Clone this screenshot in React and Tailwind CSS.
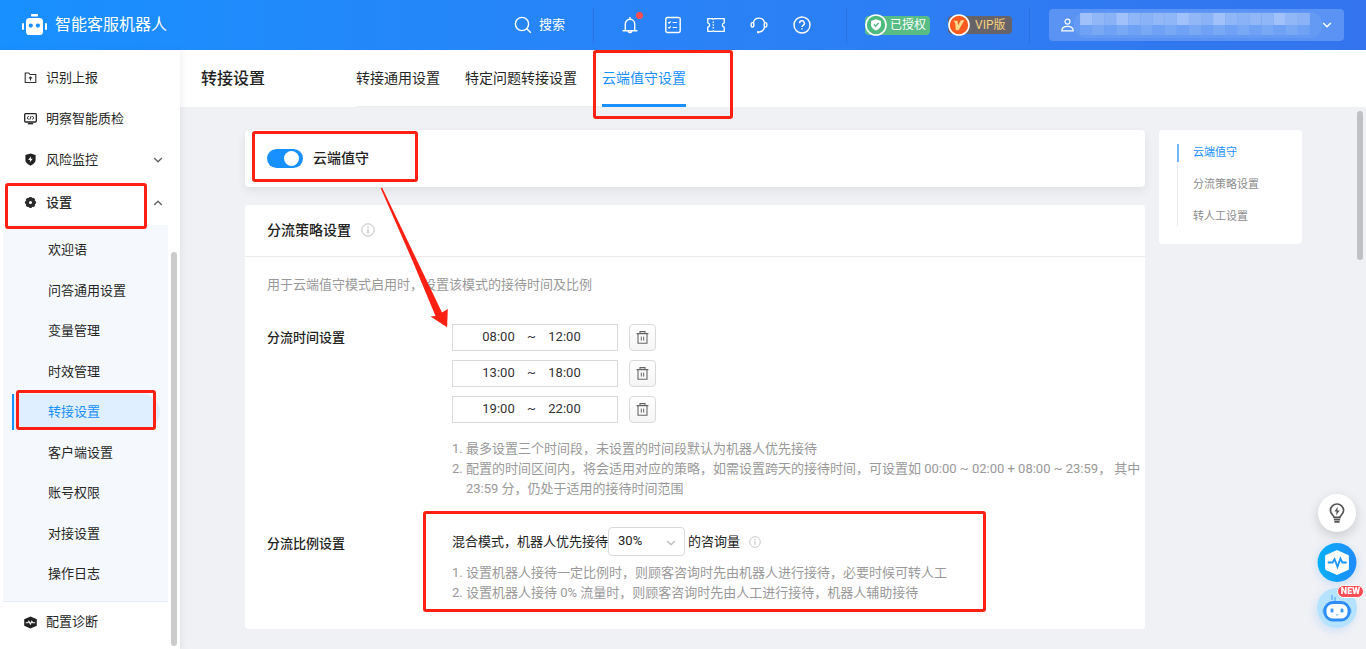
import React from "react";

const SUB_ITEMS = ["欢迎语", "问答通用设置", "变量管理", "时效管理", "转接设置", "客户端设置", "账号权限", "对接设置", "操作日志"];
const TIMES = [["08:00", "12:00"], ["13:00", "18:00"], ["19:00", "22:00"]];

function Line({ size = 18, sw = 1.4, className = "", children }) {
  return (
    <svg width={size} height={size} viewBox="0 0 18 18" fill="none" stroke="currentColor" strokeWidth={sw} className={"shrink-0 " + className} aria-hidden="true">
      {children}
    </svg>
  );
}

function Chevron({ up, size = 10, className = "" }) {
  return (
    <svg width={size} height={size} viewBox="0 0 10 10" fill="none" stroke="currentColor" strokeWidth="1.4" className={className} aria-hidden="true">
      <path d={up ? "M1.2 7 5 3.2 8.8 7" : "M1.2 3 5 6.8 8.8 3"} />
    </svg>
  );
}

function Info({ size }) {
  return (
    <svg width={size} height={size} viewBox="0 0 14 14" fill="none" stroke="#bfbfbf" className="shrink-0" aria-hidden="true">
      <circle cx="7" cy="7" r="6.2" />
      <path d="M7 6v4.2M7 3.6v1.3" strokeWidth="1.3" />
    </svg>
  );
}

function Divider() {
  return <span className="h-9 w-px bg-[#2a72e0]" />;
}

function Header() {
  return (
    <header className="flex h-[50px] shrink-0 items-center bg-linear-to-r from-[#1890ff] to-[#3374ee] px-[22px] text-white">
      <svg width="25" height="22" viewBox="0 0 25 22" fill="#fff" aria-hidden="true">
        <rect x="9" y="0" width="7" height="2.4" rx="0.6" />
        <rect x="4" y="4" width="17" height="17" rx="3.6" />
        <rect x="0" y="9" width="2" height="7" rx="1" />
        <rect x="23" y="9" width="2" height="7" rx="1" />
        <circle cx="8.8" cy="11.6" r="2.1" fill="#1890ff" />
        <circle cx="15.9" cy="11.6" r="2.1" fill="#1890ff" />
      </svg>
      <span className="ml-2 text-base">智能客服机器人</span>

      <div className="ml-auto flex items-center">
        <button className="flex items-center gap-[7px] text-[13px]">
          <Line>
            <circle cx="8" cy="8" r="6.6" />
            <path d="m12.8 12.8 4 4" />
          </Line>
          搜索
        </button>
        <div className="ml-7 flex items-center"><Divider /></div>
        <div className="ml-[27px] flex items-center gap-[25px]">
          <button className="relative" aria-label="通知">
            <Line>
              <path d="M4.3 14.6V8a4.7 4.7 0 0 1 9.4 0v6.6M1.6 14.8h14.8M9 1v2.2M7.3 15.4a1.8 1.8 0 0 0 3.4 0" />
            </Line>
            <span className="absolute -top-1 -right-1 size-[7px] rounded-full bg-[#ff4d4f]" />
          </button>
          <button aria-label="任务">
            <Line>
              <rect x="1.8" y="1.5" width="14.4" height="15" rx="1.4" />
              <path d="m4.2 6.3.9.9 1.7-1.8M8.6 6.5H13M4.2 11.3l.9.9 1.7-1.8M8.6 11.5H13" strokeWidth="1.2" />
            </Line>
          </button>
          <button aria-label="卡券">
            <Line sw={1.3}>
              <path d="M.8 2.6h4.6q.9 1.2 1.8 0h10v4.2q-1.8.3-1.8 2.200t1.8 2.200v4.200h-10q-.9-1.200-1.8 0H.8v-4.200q1.800-.3 1.800-2.200T.8 6.800z" />
              <path d="M6.300 5.400v1.600M6.300 8.200v1.600M6.300 11v1.600" />
            </Line>
          </button>
          <button aria-label="客服">
            <Line>
              <path d="M3.400 6.800a5.700 5.700 0 0 1 11.200 0M14.600 10.800c-.5 3-2.400 4.700-5.200 5.200" />
              <rect x="1.2" y="6.6" width="2.6" height="4.4" rx="1.2" />
              <rect x="14.2" y="6.6" width="2.6" height="4.4" rx="1.2" />
              <path d="M7 16.200h2.600" strokeWidth="2" />
            </Line>
          </button>
          <button aria-label="帮助">
            <Line>
              <circle cx="9" cy="9" r="8" />
              <path d="M6.600 7.200a2.400 2.400 0 1 1 3.500 2.100c-.8.4-1.100.8-1.100 1.600M9 12.200v1.400" />
            </Line>
          </button>
        </div>
        <div className="ml-[35px] flex"><Divider /></div>
        <div className="ml-[18px] flex items-center gap-[18px]">
          <span className="flex h-[19px] w-[65px] items-center rounded bg-[#57bd84] text-xs">
            <svg width="22" height="22" viewBox="0 0 22 22" className="shrink-0" aria-hidden="true">
              <circle cx="11" cy="11" r="10" fill="#4dbb7d" stroke="#fff" strokeWidth="1.6" />
              <path d="M11 5.200 16 7v3.800c0 2.600-2 4.400-5 5.800-3-1.400-5-3.200-5-5.800V7z" fill="#fff" />
              <path d="m8.800 10.400 1.800 1.800 3-3.200" fill="none" stroke="#4dbb7d" strokeWidth="1.3" />
            </svg>
            <span className="ml-[3px] whitespace-nowrap">已授权</span>
          </span>
          <span className="flex h-[18px] w-16 items-center rounded bg-[#666468] text-xs text-[#f8d27c]">
            <svg width="22" height="22" viewBox="0 0 22 22" className="shrink-0" aria-hidden="true">
              <circle cx="11" cy="11" r="10" fill="#fc5a1f" stroke="#fff" strokeWidth="1.6" />
              <path d="M5.600 6.800h4l.4 4.400 3-5h3.400L10.600 16.200H7.800L7.200 9.200z" fill="#ffd98a" />
            </svg>
            <span className="ml-[5px] whitespace-nowrap">VIP版</span>
          </span>
        </div>
        <div className="ml-[17px] flex"><Divider /></div>
        <button className="ml-[19px] flex h-8 w-[295px] items-center rounded-sm bg-[#5a93f3] px-3" aria-label="账号">
          <svg width="13" height="14" viewBox="0 0 13 14" fill="none" stroke="#fff" strokeWidth="1.2" className="shrink-0" aria-hidden="true">
            <circle cx="6.5" cy="3.6" r="2.5" />
            <path d="M.8 12.800c0-3 2.400-4.400 5.700-4.400s5.700 1.400 5.700 4.400z" />
          </svg>
          <svg viewBox="0 0 246 26" preserveAspectRatio="none" className="h-[26px] min-w-0 flex-1" aria-hidden="true">
            <rect width="246" height="26" rx="12" fill="#659af4" />
            {[6, 18, 30, 42, 54, 66, 78, 90, 102, 114, 126, 138, 150, 162, 174, 186, 198, 210, 222].map((x, i) => (
              <g key={x}>
                <rect x={x} y="1" width="12" height="12" fill={["#a0c1f9", "#91b7f7", "#8fb6f7", "#8ab2f6"][(i + (i >> 1)) % 4]} />
                <rect x={x} y="13" width="12" height="10" fill={["#6fa1f4", "#79a8f5", "#6a9df3"][(i + (i >> 1)) % 3]} />
              </g>
            ))}
          </svg>
          <Chevron className="shrink-0" />
        </button>
      </div>
    </header>
  );
}

function NavItem({ icon, label, height = "h-[41px]", arrow, bold }) {
  return (
    <a href="#" className={`flex items-center pr-[5px] pl-6 text-[13px] text-[#262626] ${height}`}>
      {icon}
      <span className={bold ? "ml-[9px] font-medium" : "ml-[9px]"}>{label}</span>
      {arrow && <Chevron up={arrow === "up"} className="ml-auto text-[#666]" />}
    </a>
  );
}

function Sidebar() {
  return (
    <aside className="relative z-10 w-[180px] shrink-0 bg-white shadow-[2px_0_6px_rgba(0,0,0,0.06)]">
      <nav className="pt-[7px] pr-3">
        <NavItem
          label="识别上报"
          icon={
            <svg width="13" height="13" viewBox="0 0 13 13" fill="none" stroke="#333" strokeWidth="1.1" aria-hidden="true">
              <path d="M1.200 11.500V2h3.600l1.200 1.500h5.800v8zM6.500 9.400V6.200M4.900 7.400l1.600-1.500 1.600 1.500" />
            </svg>
          }
        />
        <NavItem
          label="明察智能质检"
          icon={
            <svg width="13" height="13" viewBox="0 0 13 13" fill="none" stroke="#222" strokeWidth="1.3" aria-hidden="true">
              <rect x="0.7" y="1.6" width="11.6" height="8.4" rx="1" />
              <path d="M3.800 11.700h5.400" />
              <path d="M4.800 4.200 3 5.800l1.800 1.600M8.200 4.200 10 5.800 8.200 7.400M7.200 4 5.800 7.600" strokeWidth="1" />
            </svg>
          }
        />
        <NavItem
          label="风险监控"
          arrow="down"
          icon={
            <svg width="13" height="13" viewBox="0 0 13 13" aria-hidden="true">
              <path d="M6.500.4 11.600 2v5c0 2.600-2.200 4.200-5.100 5.700C3.600 11.200 1.400 9.600 1.400 7V2z" fill="#222" />
              <path d="M7 3.200 4.200 6.900h1.900l-.4 2.700 3-3.800H6.800z" fill="#fff" />
            </svg>
          }
        />
        <NavItem
          label="设置"
          arrow="up"
          bold
          height="h-[45px]"
          icon={
            <svg width="13" height="13" viewBox="0 0 13 13" aria-hidden="true">
              <circle cx="6.5" cy="6.5" r="3.2" fill="none" stroke="#2b2b2b" strokeWidth="3.4" />
              <path d="M6.500 1v2M6.500 10v2M1 6.500h2M10 6.500h2M2.600 2.600 4 4M9 9l1.400 1.400M10.400 2.600 9 4M4 9l-1.400 1.400" stroke="#2b2b2b" strokeWidth="2.4" />
            </svg>
          }
        />
        <ul className="ml-[3px] flex h-[377px] flex-col justify-between border-b border-[#e6ecf2] bg-[#f5f9fd] pt-[7px] pb-[9px] text-[13px] text-[#262626]">
          {SUB_ITEMS.map((t) => {
            const active = t === "转接设置";
            return (
              <li key={t}>
                <a
                  href="#"
                  aria-current={active ? "page" : undefined}
                  className={
                    active
                      ? "mr-2 ml-[9px] flex h-9 items-center rounded-r-full border-l-2 border-[#1890ff] bg-[#e0efff] pl-[34px] text-[#1890ff]"
                      : "flex h-9 items-center pl-[45px]"
                  }
                >
                  {t}
                </a>
              </li>
            );
          })}
        </ul>
        <NavItem
          label="配置诊断"
          height="h-10"
          icon={
            <svg width="13" height="13" viewBox="0 0 13 13" aria-hidden="true">
              <path d="M6.500.4 12.800 3.200v6.600L6.500 12.600.2 9.800V3.200z" fill="#222" />
              <path d="M1.800 6.800h2l1.100-1.600 1.500 2.800 1.400-2.600 1 1.400h2.400" fill="none" stroke="#fff" strokeWidth="1.1" />
            </svg>
          }
        />
      </nav>
      <div className="absolute top-[202px] right-[3px] bottom-[3px] w-[6px] rounded-full bg-[#cbcbcb]" />
    </aside>
  );
}

function TimeRow({ from, to, index }) {
  return (
    <div className="flex gap-[11px]">
      <div className="flex h-[27px] w-[166px] items-center justify-center border border-[#d9d9d9] pr-[7px] pb-px text-[13px] text-[#333]">
        <input type="text" defaultValue={from} aria-label={`时段${index}开始`} className="w-[34px] bg-transparent text-center outline-none" />
        <span className="w-8 text-center">~</span>
        <input type="text" defaultValue={to} aria-label={`时段${index}结束`} className="w-[34px] bg-transparent text-center outline-none" />
      </div>
      <button aria-label="删除" className="flex size-[27px] items-center justify-center rounded-sm border border-[#d9d9d9] bg-linear-to-b from-white to-[#f5f5f5] text-[#666]">
        <svg width="13" height="13" viewBox="0 0 13 13" fill="none" stroke="currentColor" strokeWidth="1.1" aria-hidden="true">
          <path d="M.6 2.600h11.800M4 2.600V.6h5v2M2 2.800v9.500h9V2.800" />
          <path d="M5.300 5.600v4M7.700 5.600v4" strokeWidth="1" />
        </svg>
      </button>
    </div>
  );
}

function Content() {
  return (
    <div className="flex items-start gap-[14px] pt-[23px] pr-16 pl-[65px]">
      <div className="min-w-0 flex-1">
        <section className="flex h-[57px] items-center rounded bg-white pb-px pl-[22px] shadow-[0_4px_10px_rgba(0,0,0,0.07)]">
          <label className="flex items-center gap-[10px] text-sm font-medium text-[#222]">
            <input
              type="checkbox"
              role="switch"
              defaultChecked
              className="h-[19px] w-9 appearance-none rounded-full bg-[#bfbfbf] p-[2px] before:block before:size-[15px] before:rounded-full before:bg-white checked:bg-[#1890ff] checked:pl-[17px]"
            />
            云端值守
          </label>
        </section>

        <section className="mt-[18px] rounded bg-white pb-[26px]">
          <h2 className="flex h-[52px] items-center gap-[10px] border-b border-[#ebebeb] pb-px pl-[22px] text-sm font-medium text-[#222]">
            分流策略设置 <Info size={14} />
          </h2>
          <p className="mt-[18px] pl-[22px] text-[13px] leading-5 text-[#999]">用于云端值守模式启用时，设置该模式的接待时间及比例</p>

          <div className="mt-[29px] flex pl-[22px]">
            <h3 className="w-[185px] shrink-0 text-[13px] leading-[27px] font-medium text-[#222]">分流时间设置</h3>
            <div className="min-w-0 flex-1">
              <div className="flex flex-col gap-[9px]">
                {TIMES.map(([a, b], i) => (
                  <TimeRow key={a} from={a} to={b} index={i + 1} />
                ))}
              </div>
              <ol className="mt-4 list-decimal pl-[14px] text-[13px] leading-5 text-[#999]">
                <li>最多设置三个时间段，未设置的时间段默认为机器人优先接待</li>
                <li>配置的时间区间内，将会适用对应的策略，如需设置跨天的接待时间，可设置如 00:00 ~ 02:00 + 08:00 ~ 23:59， 其中 23:59 分，仍处于适用的接待时间范围</li>
              </ol>
            </div>
          </div>

          <div className="mt-7 flex pl-[22px]">
            <h3 className="w-[185px] shrink-0 pt-[7px] text-[13px] leading-5 font-medium text-[#222]">分流比例设置</h3>
            <div className="min-w-0 flex-1">
              <div className="flex items-center text-[13px] text-[#222]">
                <label htmlFor="ratio" className="leading-[27px]">混合模式，机器人优先接待</label>
                <span className="relative">
                  <select id="ratio" defaultValue="30%" className="block h-[29px] w-[77px] appearance-none rounded-sm border border-[#d9d9d9] bg-white pb-px pl-[9px] text-[13px]">
                    <option>0%</option>
                    <option>30%</option>
                    <option>50%</option>
                  </select>
                  <Chevron className="pointer-events-none absolute top-[11px] right-[9px] text-[#bfbfbf]" />
                </span>
                <span className="mr-[9px] ml-[3px]">的咨询量</span>
                <Info size={12} />
              </div>
              <ol className="mt-[7px] list-decimal pl-[14px] text-[13px] leading-5 text-[#999]">
                <li>设置机器人接待一定比例时，则顾客咨询时先由机器人进行接待，必要时候可转人工</li>
                <li>设置机器人接待 0% 流量时，则顾客咨询时先由人工进行接待，机器人辅助接待</li>
              </ol>
            </div>
          </div>
        </section>
      </div>

      <nav className="w-[143px] shrink-0 rounded bg-white pt-[14px] pr-3 pb-[18px] pl-[18px] text-[11px] text-[#8c8c8c]">
        <ul className="flex flex-col gap-[14px] border-l border-[#ebebeb] leading-[18px]">
          <li className="-ml-px border-l-2 border-[#6fb5ff] pl-[14px]"><a href="#" className="text-[#1890ff]">云端值守</a></li>
          <li className="pl-[15px]"><a href="#">分流策略设置</a></li>
          <li className="pl-[15px]"><a href="#">转人工设置</a></li>
        </ul>
      </nav>
    </div>
  );
}

function FloatingTools() {
  return (
    <div className="fixed right-[9px] bottom-[21px] z-20 flex flex-col items-center gap-[7px]">
      <button aria-label="提示" className="flex size-[38px] items-center justify-center rounded-full bg-white shadow-[0_4px_12px_rgba(0,0,0,0.16)]">
        <svg width="16" height="20" viewBox="0 0 16 20" fill="none" stroke="#555" strokeWidth="1.7" aria-hidden="true">
          <path d="M5 14.300c0-2-3.600-3.200-3.600-7A6.500 6.500 0 0 1 8 1a6.500 6.500 0 0 1 6.600 6.300c0 3.800-3.600 5-3.600 7zM4.900 16.600h6.200M5.400 18.800h5.200" />
          <path d="M8.800 3.800 5.400 8.400h2.200l-.6 3.800 3.800-4.800H8.400z" fill="#555" stroke="none" />
        </svg>
      </button>
      <button aria-label="诊断" className="mt-1 -mb-px rounded-full shadow-[0_2px_8px_rgba(24,144,255,0.2)]">
        <svg width="40" height="39" viewBox="0 0 40 40" aria-hidden="true">
          <defs>
            <linearGradient id="pulse" x1="0" x2="1"><stop stopColor="#06b0f8" /><stop offset="1" stopColor="#1f8bff" /></linearGradient>
          </defs>
          <circle cx="20" cy="20" r="20" fill="url(#pulse)" />
          <path d="M20 8.500 31 13.500v13L20 31.500 9 26.500v-13z" fill="#fff" stroke="#fff" strokeWidth="2.4" strokeLinejoin="round" />
          <path d="M10.500 20h5l2-3.500 3 8 3-8.500 2 4h4.500" fill="none" stroke="#1a96fb" strokeWidth="1.8" />
        </svg>
      </button>
      <button aria-label="机器人助手" className="relative rounded-full shadow-[-2px_3px_8px_rgba(24,144,255,0.15)]">
        <svg width="40" height="40" viewBox="0 0 40 40" aria-hidden="true">
          <circle cx="20" cy="20" r="20" fill="#b5e2ff" />
          <path d="M15 7v5M18 9v4" stroke="#6fb8fa" strokeWidth="1.6" />
          <rect x="5.5" y="19" width="29" height="8" rx="3.5" fill="#69b4fb" />
          <rect x="8" y="14.500" width="24" height="17.500" rx="8" fill="#fff" stroke="#2d8df5" strokeWidth="2.8" />
          <rect x="13.5" y="20.500" width="3" height="4" rx="1.2" fill="#3d9bf8" />
          <rect x="23.5" y="20.500" width="3" height="4" rx="1.2" fill="#3d9bf8" />
          <path d="M18.500 26.500c.8 1.400 2.200 1.400 3 0z" fill="#3d9bf8" />
        </svg>
        <span className="absolute -top-[3px] -right-[7px] rounded-full border border-white bg-[#ff4d56] px-[3px] text-[9px] leading-[11px] font-black text-white">NEW</span>
      </button>
    </div>
  );
}

function Annotations() {
  return (
    <svg width="1366" height="649" className="pointer-events-none absolute top-0 left-0 z-30" fill="none" stroke="#ff2014" strokeWidth="3" aria-hidden="true">
      <rect x="6.5" y="184.5" width="139" height="43" rx="1.5" />
      <rect x="17.5" y="391.5" width="137" height="37" rx="1.5" />
      <rect x="594.5" y="51.5" width="137" height="66" rx="1.5" />
      <rect x="253.5" y="132.5" width="163" height="48" rx="1.5" />
      <rect x="424.5" y="512.5" width="560" height="98" rx="1.5" />
      <path d="M380.600 188l1.600-.2L442 312.500l5.800-3.500-.7 18.300L430.500 316.500l5-.5L413 262z" fill="#ff2014" stroke="none" />
    </svg>
  );
}

export default function App() {
  return (
    <div lang="zh-CN" className="relative flex h-screen flex-col overflow-hidden bg-[#f0f1f5] font-['Roboto','Noto_Sans_CJK_SC',sans-serif]">
      <Header />
      <div className="flex min-h-0 flex-1">
        <Sidebar />
        <main className="relative flex min-w-0 flex-1 flex-col">
          <div className="flex h-[57px] shrink-0 bg-white pl-[21px]">
            <h1 className="w-[155px] text-base leading-[57px] font-medium text-[#222]">转接设置</h1>
            <nav className="flex gap-[25px] border-b border-[#ebebeb] text-sm leading-[56px] text-[#262626]">
              <a href="#">转接通用设置</a>
              <a href="#">特定问题转接设置</a>
              <a href="#" aria-current="page" className="-mb-px border-b-3 border-[#1890ff] text-[#1890ff]">云端值守设置</a>
            </nav>
          </div>
          <div className="min-h-0 flex-1 overflow-hidden"><Content /></div>
          <div className="absolute top-[61px] right-[3px] h-[149px] w-[6px] rounded-full bg-[#c1c1c3]" />
        </main>
      </div>
      <FloatingTools />
      <Annotations />
    </div>
  );
}
